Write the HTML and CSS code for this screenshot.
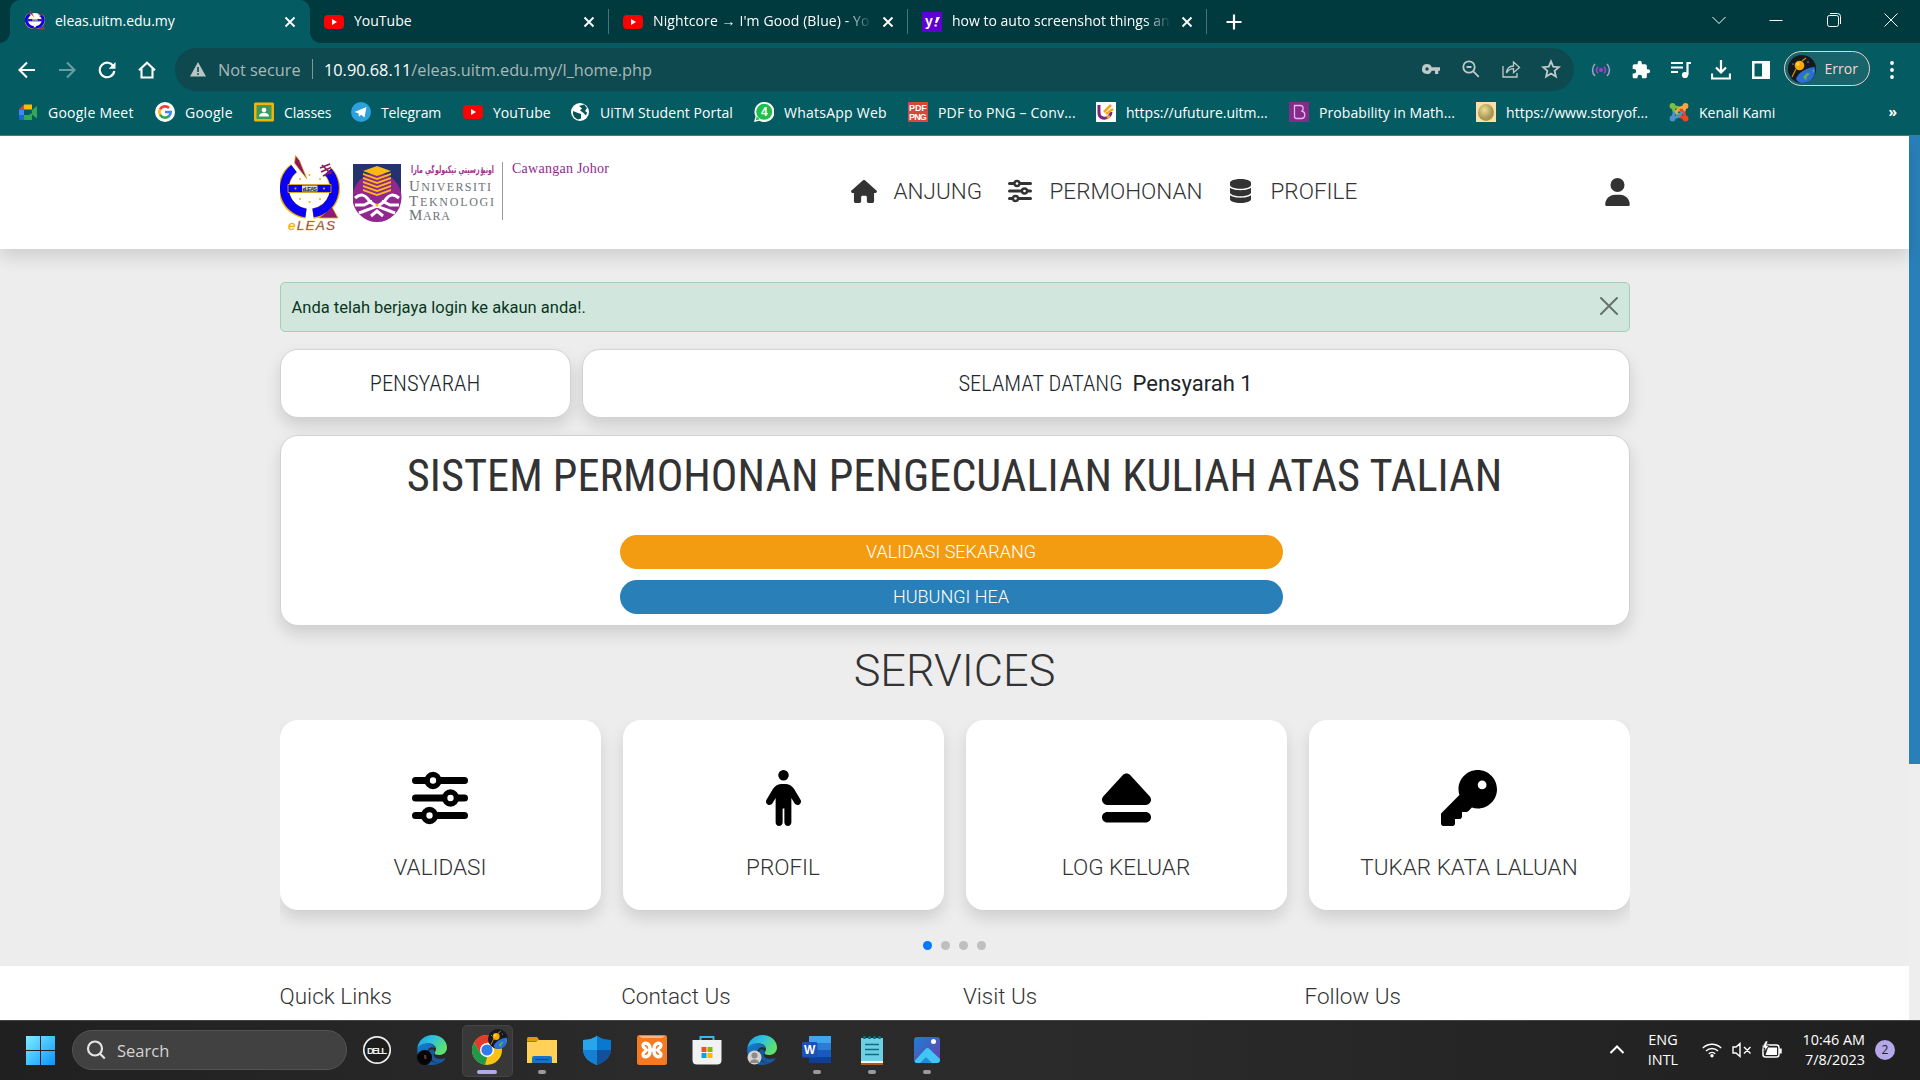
FILE: index.html
```html
<!DOCTYPE html>
<html lang="ms">
<head>
<meta charset="utf-8">
<title>eleas.uitm.edu.my</title>
<link rel="stylesheet" href="styles.css">
</head>
<body>
<svg class="defs" width="0" height="0" aria-hidden="true">
  <defs>
    <symbol id="sliders" viewBox="0 0 512 512">
      <path d="M32 96H480M32 256H480M32 416H480" stroke="currentColor" stroke-width="64" stroke-linecap="round"/>
      <g fill="#fff" stroke="currentColor" stroke-width="50"><circle cx="192" cy="96" r="54"/><circle cx="352" cy="256" r="54"/><circle cx="160" cy="416" r="54"/></g>
    </symbol>
    <symbol id="yt" viewBox="0 0 20 20"><rect y="3" width="20" height="14" rx="4" fill="#f00"/><path d="M8 7l5 3-5 3z" fill="#fff"/></symbol>
    <symbol id="x" viewBox="0 0 12 12"><path d="M1.5 1.5l9 9M10.500 1.500l-9 9" stroke="#fff" stroke-width="1.900"/></symbol>
    <linearGradient id="edgeA" x1="0" y1="0" x2="1" y2=".5"><stop offset="0" stop-color="#1b9de2"/><stop offset=".5" stop-color="#2fc2df"/><stop offset="1" stop-color="#62e06a"/></linearGradient>
    <linearGradient id="edgeB" x1="0" y1="0" x2="1" y2="1"><stop offset="0" stop-color="#1480cf"/><stop offset="1" stop-color="#0f4a96"/></linearGradient>
    <symbol id="edge" viewBox="0 0 30 30">
      <path d="M.3 14C1 5 8 0 15.500 0 24 0 30 6 30 12.500c0 5-4 7.500-8 7.500-3 0-4.500-1-4.500-2 0-1 1.500-1.500 1.500-4 0-3-3-5.500-7-5.500C6 8.500 1 11 .3 14z" fill="url(#edgeA)"/>
      <path d="M.3 14C1.500 10 6 8 11 8.500c4 .3 7 2.500 7 4.500-4-2-8 1-8 5.500 0 5 4 9 9.500 9 4 0 7-1.500 8.500-4C25.500 27.500 20.500 30 15 30 6.500 30-.5 23 .3 14z" fill="url(#edgeB)"/>
      <path d="M15 14c-3 1-4 4-3 7 1.500 5 7 7.500 12 6.500 2-.5 4-2.500 4.500-4.500-5 2-10 1-11.500-2-.8-1.600.5-3 .5-5z" fill="#17589f"/>
    </symbol>
    <symbol id="avatar" viewBox="0 0 28 28">
      <circle cx="14" cy="14" r="14" fill="#15191f"/>
      <path d="M8 24C10 18 17 13 26.500 12 29 20 23 28 14 28c-2 0-5-1.500-6-4z" fill="#2a6fd6"/>
      <path d="M15 22l4-4 3 .5-3 3-1 4zM24 15l2 0 0 3z" fill="#5fae4a"/>
      <circle cx="11.500" cy="10.500" r="4.800" fill="#f7a900"/><path d="M8 14l-4 8M14 6l4-3" stroke="#d98a10" stroke-width="1.200"/><circle cx="10" cy="9" r="1.800" fill="#ffd34d"/>
      <circle cx="20" cy="7" r=".6" fill="#fff"/><circle cx="5" cy="9" r=".6" fill="#fff"/>
    </symbol>
    <symbol id="eleas" viewBox="0 0 60 78" preserveAspectRatio="none">
      <circle cx="29.500" cy="34.500" r="24" fill="#fff"/>
      <path d="M14 14.500A25 25 0 0 0 26 59.500M33 59.500A25 25 0 0 0 48 17.500" fill="none" stroke="#f0b000" stroke-width="10.500"/>
      <path d="M52 53l6 11H39z" fill="#8b1a7a" stroke="#f0b000" stroke-width=".8"/>
      <path d="M14 14.500A25 25 0 0 0 26 59M33 59A25 25 0 0 0 48 17.500" fill="none" stroke="#0a00f5" stroke-width="8.800"/>
      <path d="M8 30.500h43v8H8z" fill="#0a00f5" stroke="#f0b000" stroke-width=".8"/>
      <circle cx="29.500" cy="21" r="1" fill="#f0b000"/><circle cx="20" cy="25" r="1" fill="#f0b000"/><circle cx="40" cy="25" r="1" fill="#f0b000"/><circle cx="29.500" cy="48" r="1" fill="#f0b000"/><circle cx="20" cy="45" r="1" fill="#f0b000"/><circle cx="40" cy="45" r="1" fill="#f0b000"/>
      <circle cx="15.500" cy="34.500" r="1" fill="#f0b000"/><circle cx="44" cy="34.500" r="1" fill="#f0b000"/>
      <rect x="22" y="31.500" width="15.500" height="6" fill="#d9d9e8"/><text x="22.500" y="36.600" font-family="Liberation Sans" font-size="5.500" font-weight="700" textLength="14.500" fill="#222">eLEAS</text>
      <path d="M15.500 1.500l4 5L27 25l-6.500-8L14.500 9z" fill="#8b1a5c" stroke="#f0b000" stroke-width=".6"/>
      <path d="M40 14l10-4M41 18l10-4.500M43 22l9-4.500M42 11l9 9" stroke="#8b1a5c" stroke-width="1.700" fill="none"/>
    </symbol>
  </defs>
</svg>

<div class="screen">
  <div class="tabs">
    <div class="tab active"><svg class="fav" width="20" height="23"><use href="#eleas"/></svg><span class="title">eleas.uitm.edu.my</span><svg class="close" width="12" height="12"><use href="#x"/></svg></div>
    <div class="tab t2"><svg class="fav" width="20" height="20"><use href="#yt"/></svg><span class="title">YouTube</span><svg class="close" width="12" height="12"><use href="#x"/></svg></div>
    <div class="tab t3"><svg class="fav" width="20" height="20"><use href="#yt"/></svg><span class="title fade">Nightcore → I'm Good (Blue) - Yo</span><svg class="close" width="12" height="12"><use href="#x"/></svg></div>
    <div class="tab t4"><svg class="fav" width="20" height="20" viewBox="0 0 20 20"><rect width="20" height="20" fill="#5f01d1"/><text x="3" y="14" font-family="Liberation Sans" font-weight="700" font-size="14" fill="#fff">y</text><path d="M13 11l1.500-6H18l-3 6zM12.500 12.500h2.200v2h-2.200z" fill="#fff"/></svg><span class="title fade">how to auto screenshot things an</span><svg class="close" width="12" height="12"><use href="#x"/></svg></div>
    <svg class="newtab" width="16" height="16" viewBox="0 0 16 16"><path d="M8 .5v15M.5 8h15" stroke="#fff" stroke-width="2.200"/></svg>
    <div class="winctl">
      <svg width="14" height="14" viewBox="0 0 14 14"><path d="M.5 4L7 10.500 13.500 4"/></svg>
      <svg width="14" height="14" viewBox="0 0 14 14"><path d="M.5 7.500h13"/></svg>
      <svg width="14" height="14" viewBox="0 0 14 14"><rect x=".5" y="2.500" width="11" height="11" rx="2"/><path d="M3 .5h7.500a3 3 0 0 1 3 3V11"/></svg>
      <svg width="14" height="14" viewBox="0 0 14 14"><path d="M.5.5l13 13M13.500.5l-13 13"/></svg>
    </div>
  </div>

  <div class="toolbar">
    <div class="navbtns">
      <svg width="18" height="18" viewBox="0 0 18 18"><path d="M17 9H2M9 1.500L1.500 9 9 16.500"/></svg>
      <svg class="dim" width="18" height="18" viewBox="0 0 18 18"><path d="M1 9h15M9 1.500L16.500 9 9 16.500"/></svg>
      <svg width="18" height="18" viewBox="0 0 18 18"><path d="M15.500 5.500A7.300 7.300 0 1 0 16.300 10"/><path d="M17.500 1v6.800h-6.800z" fill="#fff" stroke="none"/></svg>
      <svg width="18" height="18" viewBox="0 0 18 18"><path d="M3.500 7.500v9h11v-9M1 9.200L9 1.800l8 7.400"/></svg>
    </div>
    <div class="omnibox">
      <svg class="warn" width="16" height="15" viewBox="0 0 16 15"><path d="M8 0l8 14.500H0z" fill="#b9c4c6"/><path d="M8 5v5M8 11.200v1.800" stroke="#0e494f" stroke-width="1.600"/></svg>
      <span class="insecure">Not secure</span><i></i>
      <span class="url"><b>10.90.68.11</b>/eleas.uitm.edu.my/l_home.php</span>
      <div class="omniicons">
        <svg width="20" height="20" viewBox="0 0 20 20"><path d="M6 5a5 5 0 1 0 4.700 6.700H14V15h3.300v-3.300H19V8.300h-8.300A5 5 0 0 0 6 5zm0 3.300a1.700 1.700 0 1 1 0 3.400 1.700 1.700 0 0 1 0-3.400z" fill="#bfc9ca"/></svg>
        <svg class="ln" width="20" height="20" viewBox="0 0 20 20"><circle cx="8" cy="8" r="5.700"/><path d="M12.300 12.300l5.500 5.500M5.500 8h5"/></svg>
        <svg class="ln thin" width="20" height="20" viewBox="0 0 20 20"><path d="M2 7v11h14v-4M5.500 14c.5-4.500 3-7 7-7V3l6 5.500-6 5v-3.800c-3 0-5 1-7 4.300z"/></svg>
        <svg class="ln" width="20" height="20" viewBox="0 0 20 20"><path d="M10 2.300l2.200 5.300 5.700.5-4.300 3.800 1.300 5.600-4.900-3-4.900 3 1.300-5.600L2.100 8.100l5.700-.5z"/></svg>
      </div>
    </div>
    <div class="ext">
      <svg width="20" height="20" viewBox="0 0 20 20" fill="none" stroke="#b13bd0" stroke-width="1.500"><circle cx="10" cy="10" r="1.300" fill="#b51fd1"/><path d="M7 6.700a5 5 0 0 0 0 6.600M13 6.700a5 5 0 0 1 0 6.600"/><path stroke="#a9a0c8" d="M4 4a8.500 8.500 0 0 0 0 12M16 4a8.500 8.500 0 0 1 0 12"/></svg>
      <svg width="20" height="20" viewBox="0 0 24 24"><path fill="#fff" d="M20.500 11H19V7c0-1.100-.9-2-2-2h-4V3.500a2.500 2.500 0 0 0-5 0V5H4a2 2 0 0 0-2 2v3.800h1.500a2.700 2.700 0 0 1 0 5.400H2V20c0 1.100.9 2 2 2h3.800v-1.500a2.700 2.700 0 0 1 5.400 0V22H17a2 2 0 0 0 2-2v-4h1.500a2.500 2.500 0 0 0 0-5z"/></svg>
      <svg width="20" height="20" viewBox="0 0 20 20" fill="none" stroke="#fff" stroke-width="2.200"><path d="M0 3h12M0 7.500h12M0 12h7M16.500 15V3H20"/><circle cx="14" cy="15" r="2" fill="#fff"/></svg>
      <svg width="20" height="20" viewBox="0 0 20 20" fill="none" stroke="#fff" stroke-width="2.200"><path d="M10 0v12M5 7.500l5 5 5-5M1 13.500V18.500h18v-5"/></svg>
      <svg width="20" height="20" viewBox="0 0 20 20"><path fill="#fff" fill-rule="evenodd" d="M1 1h18v18H1zM3.500 3.500v13H11v-13z"/></svg>
    </div>
    <div class="chip"><svg width="28" height="28"><use href="#avatar"/></svg><span>Error</span></div>
    <svg class="kebab" width="4" height="18" viewBox="0 0 4 18" fill="#fff"><circle cx="2" cy="2" r="1.900"/><circle cx="2" cy="9" r="1.900"/><circle cx="2" cy="16" r="1.900"/></svg>
  </div>

  <div class="bookmarks">
    <div><svg width="20" height="20" viewBox="0 0 20 20"><path d="M6 2.500h8v5H6z" fill="#fbbc04"/><path d="M1 7.500l5-5v5z" fill="#ea4335"/><path d="M1 7.500h5v6H1z" fill="#4285f4"/><path d="M1 13.500h5V18H2.500C1.500 18 1 17.500 1 16.500z" fill="#1967d2"/><path d="M6 13h5l3-2v7H6zM14 8l5-4v12.500L14 12.500z" fill="#34a853"/></svg><span>Google Meet</span></div>
    <div><svg width="20" height="20" viewBox="0 0 20 20"><circle cx="10" cy="10" r="10" fill="#fff"/><g fill="none" stroke-width="2.600"><path d="M14 6A5.700 5.700 0 0 0 5 7.300" stroke="#ea4335"/><path d="M5 7.300a5.700 5.700 0 0 0 0 5.400" stroke="#fbbc04"/><path d="M5 12.700a5.700 5.700 0 0 0 8.800 1.500" stroke="#34a853"/><path d="M13.600 14.400A5.700 5.700 0 0 0 15.700 10H10" stroke="#4285f4"/></g></svg><span>Google</span></div>
    <div><svg width="20" height="20" viewBox="0 0 20 20"><rect width="20" height="19" y=".5" rx="1.500" fill="#f4b400"/><rect x="2.500" y="3" width="15" height="14" fill="#3c9b57"/><circle cx="10" cy="8" r="2.300" fill="#fff"/><path d="M5 14.500c0-5 10-5 10 0z" fill="#fff"/></svg><span>Classes</span></div>
    <div><svg width="20" height="20" viewBox="0 0 20 20"><circle cx="10" cy="10" r="10" fill="#2ba1dd"/><path d="M3.500 10L15.500 5l-2 10.500-3.500-2.700-2 2-.7-3.500z" fill="#fff"/></svg><span>Telegram</span></div>
    <div><svg width="20" height="20"><use href="#yt"/></svg><span>YouTube</span></div>
    <div><svg width="20" height="20" viewBox="0 0 20 20"><circle cx="10" cy="10" r="9" fill="#fff"/><path d="M3 9l5 2 3 1v4.500l-3 1C4 16 2.500 13 3 9zM9 4l5-1.500L17 6l-2 3 2 1.500-1 3-3-3-3-2 2-2z" fill="#07545a"/></svg><span>UiTM Student Portal</span></div>
    <div><svg width="20" height="20" viewBox="0 0 20 20"><path d="M0 20l1.500-5.500A10 10 0 1 1 5.500 18.700z" fill="#fff"/><circle cx="10.200" cy="9.800" r="8" fill="#1fbf4a"/><path d="M1.800 18.200l1-4 3 3z" fill="#1fbf4a"/><text x="7" y="14.200" font-family="Liberation Sans" font-size="12" font-weight="700" fill="#fff">4</text></svg><span>WhatsApp Web</span></div>
    <div><svg width="20" height="20" viewBox="0 0 20 20"><rect width="20" height="20" fill="#d6493a"/><g font-family="Liberation Sans" font-size="9" font-weight="700" fill="#fff"><text x="1" y="9" textLength="18">PDF</text><text x="1" y="18" textLength="18">PNG</text></g></svg><span>PDF to PNG – Conv...</span></div>
    <div><svg width="20" height="20" viewBox="0 0 20 20"><rect width="20" height="20" fill="#fff"/><path d="M3 3c0 8-1 12 4 13s8-3 8-6" fill="none" stroke="#7c2682" stroke-width="3"/><path d="M8 10l7-7M10 12l7-5M11 16l3-2" stroke="#f2a81d" stroke-width="2.600"/></svg><span>https://ufuture.uitm...</span></div>
    <div><svg width="20" height="20" viewBox="0 0 20 20"><rect width="20" height="20" fill="#862a8b"/><path d="M5.500 3.500h6c3 0 3.500 4 1.500 5.500 4 1 3.500 7.500-.5 7.500h-5c-1.500 0-2-1-2-2z" fill="none" stroke="#e3b8e6" stroke-width="1.300"/></svg><span>Probability in Math...</span></div>
    <div><svg width="20" height="20" viewBox="0 0 20 20"><defs><radialGradient id="egg" cx=".4" cy=".35"><stop offset="0" stop-color="#efe08e"/><stop offset="1" stop-color="#a8965a"/></radialGradient></defs><rect width="20" height="20" fill="#fbdfa4"/><ellipse cx="10" cy="10.500" rx="8" ry="8.500" fill="url(#egg)"/></svg><span>https://www.storyof...</span></div>
    <div><svg width="20" height="20" viewBox="0 0 20 20" fill="none" stroke-width="3" stroke-linecap="round"><path d="M4 15V11q0-2 2-4l3-3q2-1.500 4 0l2 2" stroke="#5091cd" transform="rotate(180 10 10)" stroke-opacity="0"/><path d="M4.500 13.500V8.500L9 4" stroke="#7ac143" stroke-opacity="0"/><path d="M4 4.500L5 9 11.500 14.500" stroke="#7ac143"/><path d="M4 4.500L9 5.500 12 9" stroke="#7ac143"/><path d="M16 4.500L11 6 7 10M16 4.500L15 9" stroke="#f9a541"/><path d="M16 16L15 11 12 8M16 16l-5-1.500" stroke="#f44321"/><path d="M4 16l5-1.500L12.500 11M4 16l1-5" stroke="#5091cd"/><g stroke="none"><circle cx="3.500" cy="4" r="2.900" fill="#7ac143"/><circle cx="16.500" cy="4" r="2.900" fill="#f9a541"/><circle cx="16.500" cy="16.500" r="2.900" fill="#f44321"/><circle cx="3.500" cy="16.500" r="2.900" fill="#5091cd"/></g></svg><span>Kenali Kami</span></div>
    <em>»</em>
  </div>

  <div class="page">
    <div class="view">
      <header>
        <div class="wrap headrow">
          <div class="logos">
            <svg width="60" height="78" viewBox="0 0 60 78"><use href="#eleas"/><text y="76.200" x="8" font-family="Liberation Sans" font-style="italic" font-size="13.500" textLength="47" fill="#3a1a9c" stroke="#f0b000" stroke-width=".4"><tspan fill="#f5b800">e</tspan>LEAS</text></svg>
            <svg width="260" height="62" viewBox="0 0 260 62">
              <path d="M0 2h48v33H0z" fill="#24326e"/><circle cx="24" cy="35.500" r="24.500" fill="#92278f"/>
              <g fill="#fdb913"><path d="M24 4l14 5-14 5-14-5z"/><path d="M10 11l14 5 14-5v2l-14 5-14-5zM10 15l14 5 14-5v2l-14 5-14-5zM10 19l14 5 14-5v2l-14 5-14-5zM10 23l14 5 14-5v2l-14 5-14-5zM10 27l14 5 14-5v2l-14 5-14-5z"/></g>
              <path d="M2 36c6-5 10-3 13 1 3 6 14 9 27 14M46 36c-6-5-10-3-13 1-3 6-14 9-27 14M2 43h9l8-4M46 43h-9l-8-4M18 54l6-5 6 5" fill="none" stroke="#fff" stroke-width="3"/>
              <circle cx="24" cy="43" r="1.600" fill="#fdb913"/>
              <text x="58" y="11" font-family="DejaVu Sans" font-size="10.500" font-weight="700" fill="#a0308f" textLength="83" lengthAdjust="spacingAndGlyphs">اونيۏرسيتي تيكنولوݢي مارا</text>
              <g font-family="Liberation Serif" fill="#6d7478"><text x="56" y="29" font-size="12" textLength="82"><tspan font-size="15">U</tspan>NIVERSITI</text><text x="56" y="43.500" font-size="12" textLength="85"><tspan font-size="15">T</tspan>EKNOLOGI</text><text x="56" y="57.500" font-size="12" textLength="41"><tspan font-size="15">M</tspan>ARA</text></g>
              <path d="M149.500 0v58" stroke="#9b9b9b"/>
              <text x="159" y="11" font-family="Liberation Serif" font-size="14" textLength="97" fill="#92278f">Cawangan Johor</text>
            </svg>
          </div>
          <nav>
            <a><svg width="26" height="23" viewBox="0 0 576 512"><path fill="currentColor" d="M575.800 255.500c0 18-15 32.100-32 32.100h-32l.7 160.200c0 2.700-.2 5.400-.5 8.100V472c0 22.100-17.900 40-40 40H392c-22.100 0-40-17.900-40-40V384c0-17.700-14.300-32-32-32H256c-17.700 0-32 14.300-32 32v88c0 22.100-17.900 40-40 40H104c-22.100 0-40-17.900-40-40V287.600H32c-18 0-32-14-32-32.100c0-9 3-17 10-24L266.400 8c7-7 15-8 22-8s15 2 21 7L564.800 231.500c8 7 12 15 11 24z"/></svg><span>ANJUNG</span></a>
            <a><svg width="24" height="24"><use href="#sliders"/></svg><span>PERMOHONAN</span></a>
            <a><svg width="21" height="24" viewBox="0 0 448 512"><path fill="currentColor" d="M448 80v48c0 44.200-100.300 80-224 80S0 172.200 0 128V80C0 35.800 100.300 0 224 0S448 35.800 448 80zM393.200 214.700c20.800-7.400 39.900-16.900 54.800-28.600V288c0 44.200-100.300 80-224 80S0 332.200 0 288V186.100c14.900 11.800 34 21.200 54.800 28.600C99.700 230.700 159.500 240 224 240s124.300-9.300 169.200-25.300zM0 346.100c14.900 11.800 34 21.200 54.800 28.600C99.700 390.700 159.500 400 224 400s124.300-9.300 169.200-25.300c20.800-7.400 39.900-16.900 54.800-28.600V432c0 44.200-100.300 80-224 80S0 476.200 0 432V346.100z"/></svg><span>PROFILE</span></a>
          </nav>
          <svg class="user" width="25" height="28" viewBox="0 0 448 512"><path fill="#333" d="M224 256A128 128 0 1 0 224 0a128 128 0 1 0 0 256zm-45.700 48C79.800 304 0 383.800 0 482.300C0 498.700 13.300 512 29.700 512H418.300c16.400 0 29.700-13.300 29.700-29.700C448 383.800 368.200 304 269.700 304H178.300z"/></svg>
        </div>
      </header>

      <main class="wrap">
        <div class="alert"><span>Anda telah berjaya login ke akaun anda!.</span><svg width="18" height="18" viewBox="0 0 18 18"><path d="M1 1l16 16M17 1L1 17" stroke="#66726c" stroke-width="2" stroke-linecap="round"/></svg></div>
        <div class="row">
          <div class="card role">PENSYARAH</div>
          <div class="card hello">SELAMAT DATANG<strong>Pensyarah 1</strong></div>
        </div>
        <section class="card hero">
          <h1>SISTEM PERMOHONAN PENGECUALIAN KULIAH ATAS TALIAN</h1>
          <a class="btn orange">VALIDASI SEKARANG</a>
          <a class="btn blue">HUBUNGI HEA</a>
        </section>
        <h2>SERVICES</h2>
        <div class="slider">
          <div class="svc"><svg width="56" height="56"><use href="#sliders"/></svg><span>VALIDASI</span></div>
          <div class="svc"><svg width="35" height="56" viewBox="0 0 320 512"><path d="M112 48a48 48 0 1 1 96 0 48 48 0 1 1 -96 0zm40 304V480c0 17.700-14.300 32-32 32s-32-14.300-32-32V256.900L59.400 304.500c-9.100 15.100-28.800 20-43.900 10.900s-20-28.800-10.900-43.900l58.300-97c17.400-28.900 48.600-46.600 82.300-46.600h29.700c33.700 0 64.900 17.700 82.300 46.600l58.300 97c9.100 15.100 4.200 34.800-10.900 43.900s-34.800 4.200-43.900-10.900L232 256.900V480c0 17.700-14.300 32-32 32s-32-14.300-32-32V352H152z"/></svg><span>PROFIL</span></div>
          <div class="svc"><svg width="49" height="56" viewBox="0 0 448 512"><path d="M224 32c13.500 0 26.300 5.600 35.400 15.600l176 192c12.900 14 16.200 34.300 8.600 51.800S419 320 400 320H48c-19 0-36.300-11.200-43.900-28.700s-4.300-37.700 8.600-51.800l176-192C197.700 37.600 210.500 32 224 32zM0 432c0-26.500 21.500-48 48-48H400c26.500 0 48 21.500 48 48s-21.500 48-48 48H48c-26.500 0-48-21.500-48-48z"/></svg><span>LOG KELUAR</span></div>
          <div class="svc"><svg width="56" height="56" viewBox="0 0 512 512"><path d="M336 352c97.200 0 176-78.800 176-176S433.200 0 336 0S160 78.800 160 176c0 18.700 2.900 36.800 8.300 53.700L7 391c-4.500 4.500-7 10.600-7 17v80c0 13.300 10.700 24 24 24h80c13.300 0 24-10.700 24-24V448h40c13.300 0 24-10.700 24-24V384h40c6.400 0 12.500-2.500 17-7l33.300-33.300c16.900 5.400 35 8.300 53.700 8.300zM376 96a40 40 0 1 1 0 80 40 40 0 1 1 0-80z"/></svg><span>TUKAR KATA LALUAN</span></div>
        </div>
        <div class="dots"><i class="on"></i><i></i><i></i><i></i></div>
      </main>

      <footer><div class="wrap foot"><span>Quick Links</span><span>Contact Us</span><span>Visit Us</span><span>Follow Us</span></div></footer>
    </div>
    <div class="scroll"><div class="thumb"></div></div>
  </div>

  <div class="taskbar">
    <svg class="win" width="29" height="29" viewBox="0 0 29 29"><defs><linearGradient id="w" x1="0" y1="0" x2="1" y2="1"><stop offset="0" stop-color="#7df0ff"/><stop offset="1" stop-color="#0a93ff"/></linearGradient></defs><path fill="url(#w)" d="M0 0h14v14H0zM15 0h14v14H15zM0 15h14v14H0zM15 15h14v14H15z"/></svg>
    <div class="search"><svg width="20" height="20" viewBox="0 0 20 20" fill="none" stroke="#e4e4e4" stroke-width="2.200"><circle cx="9" cy="8.500" r="7"/><path d="M13.800 13.500l5 5"/></svg><span>Search</span></div>
    <div class="apps">
      <div><svg width="30" height="30" viewBox="0 0 30 30"><circle cx="15" cy="15" r="13.200" fill="#1d1d1d" stroke="#eee" stroke-width="1.700"/><text x="5" y="18.500" font-family="Liberation Sans" font-weight="700" font-size="9.500" textLength="20" fill="#eee">DELL</text></svg></div>
      <div><svg width="30" height="30" viewBox="0 0 30 30"><use href="#edge"/><circle cx="7.500" cy="22.500" r="7.500" fill="#050505"/><path d="M7 20h2l.5 4H7.500z" fill="#6a3a30"/></svg></div>
      <div class="cur"><svg width="30" height="30" viewBox="0 0 30 30"><circle cx="15" cy="15" r="15" fill="#fbc116"/><path d="M2 7.500A15 15 0 0 1 28 7.500H15L8.500 18.500z" fill="#e33b2e"/><path d="M2 7.500L8.500 18.500 15 22.500 13 29.900A15 15 0 0 1 2 7.500z" fill="#1f9a48"/><circle cx="15" cy="15" r="7" fill="#fff"/><circle cx="15" cy="15" r="5.600" fill="#2f7bea"/></svg><svg class="mini" width="20" height="20"><use href="#avatar"/></svg><u class="on"></u></div>
      <div><svg width="30" height="30" viewBox="0 0 30 30"><path d="M0 3.500Q0 2 1.500 2H10l3 4H0z" fill="#dc9a06"/><path d="M0 6.500h9L12 5h18v23H0z" fill="#ffd257"/><path d="M5 28v-5q0-2 2-2h16q2 0 2 2v5z" fill="#1275c9"/><path d="M8.500 24.500h13" stroke="#0b4c8f" stroke-width="1.200"/></svg><u></u></div>
      <div><svg width="30" height="30" viewBox="0 0 30 30"><path d="M15 .5C11 4 6 4.500 1 5v9c0 8 6 13 14 16z" fill="#2aa4ea"/><path d="M15 .5c4 3.500 9 4 14 4.500v9c0 8-6 13-14 16z" fill="#0b78d0"/><path d="M1 15h14v15C7 27 1.500 22 1 15z" fill="#1380d6"/><path d="M15 15h14c-.5 7-6 12-14 15z" fill="#11509a"/></svg></div>
      <div><svg width="30" height="30" viewBox="0 0 30 30"><rect width="30" height="30" rx="2.500" fill="#f37a22"/><path d="M2 1h26l-3 2H5z" fill="#f9b48a"/><path d="M12 15h6M13 13.500c0-5.500-7-7-7-3C6 13 9 13 9 15S6 17 6 19.500c0 4 7 2.500 7-3M17 13.500c0-5.500 7-7 7-3 0 2.500-3 2.500-3 4.500s3 2 3 4.500c0 4-7 2.500-7-3" fill="none" stroke="#fff" stroke-width="3.300" stroke-linejoin="round" stroke-linecap="round"/></svg></div>
      <div><svg width="30" height="30" viewBox="0 0 30 30"><path d="M8.500 6V2h13v4" fill="none" stroke="#2dbdf0" stroke-width="2"/><path d="M.5 5h29v20q0 4.500-4.500 4.500H5Q.5 29.500.5 25z" fill="#f2f2f2"/><path fill="#f25022" d="M9.500 12h5v5h-5z"/><path fill="#7fba00" d="M15.500 12h5v5h-5z"/><path fill="#00a4ef" d="M9.500 18h5v5h-5z"/><path fill="#ffb900" d="M15.500 18h5v5h-5z"/></svg></div>
      <div><svg width="30" height="30" viewBox="0 0 30 30"><use href="#edge"/><circle cx="7.500" cy="22.500" r="7" fill="#d5d2cf"/><circle cx="7.500" cy="20.500" r="3" fill="#8d8a87"/><path d="M3 28c0-5 9-5 9 0z" fill="#8d8a87"/></svg></div>
      <div><svg width="30" height="30" viewBox="0 0 30 30"><path fill="#41a5ee" d="M7 1h22v7H7z"/><path fill="#2b7cd3" d="M7 8h22v7H7z"/><path fill="#185abd" d="M7 15h22v7H7z"/><path fill="#103f91" d="M7 22h22v6H7z"/><rect y="7" width="15.500" height="15.500" rx="1.500" fill="#1a52b5"/><text x="2" y="19" font-family="Liberation Sans" font-weight="700" font-size="12" fill="#fff">W</text></svg><u></u></div>
      <div><svg width="30" height="30" viewBox="0 0 30 30"><path d="M4 24h22v6H4z" fill="#b4551c"/><path d="M4 3h22v24H4z" fill="#6fcfe2"/><path d="M4 26h22v2H4z" fill="#f3f3f3"/><path d="M8 9.500h14M8 14.500h14M8 19.500h14" stroke="#0d6c86" stroke-width="1.700"/><path d="M7.500 1v3M12.500 1v3M17.500 1v3M22.500 1v3" stroke="#0d6c86" stroke-width="2.400"/></svg><u></u></div>
      <div><svg width="30" height="30" viewBox="0 0 30 30"><defs><linearGradient id="ph" x1="0" y1="0" x2="1" y2="1"><stop offset="0" stop-color="#1c7fd8"/><stop offset="1" stop-color="#6b3fa8"/></linearGradient></defs><rect x="2" y="2" width="26" height="26" rx="3" fill="url(#ph)"/><path d="M2.500 26l11-12q2-2 4 0L28 24v1q0 3-3 3H5q-2 0-2.500-2z" fill="#3fc6f5"/><path d="M8 28l6-6 6 6z" fill="#1d8ddb"/><circle cx="21.500" cy="6.500" r="2.500" fill="#fff"/></svg><u></u></div>
    </div>
    <div class="tray">
      <svg width="16" height="16" viewBox="0 0 16 16" class="tl"><path d="M1.500 11L8 4.500 14.500 11" stroke-width="2"/></svg>
      <div class="lang">ENG<br>INTL</div>
      <svg width="20" height="16" viewBox="0 0 20 16" class="tl"><path d="M.8 6a13 13 0 0 1 18.400 0M4 9a8.500 8.500 0 0 1 12 0M6.800 11.800a4.600 4.600 0 0 1 6.400 0" stroke-width="1.500"/><circle cx="10" cy="13.800" r="1.700" fill="#fff" stroke="none"/></svg>
      <svg width="20" height="16" viewBox="0 0 20 16" class="tl"><path d="M1 5v6h3l4 3.500v-13L4 5zM12 5l6.500 6.500M18.500 5L12 11.500" stroke-width="1.400"/></svg>
      <svg width="21" height="18" viewBox="0 0 21 18" class="tl"><rect x="1" y="4" width="16" height="12" rx="2.500" stroke-width="1.500"/><path d="M6 6.500h9V14H3.500z" fill="#fff" stroke="none"/><path d="M18.500 7.500v5" stroke-width="2.400"/><path d="M3.500 0L0 7h3l-1 4 5-6.500H4.500L6 0z" fill="#fff" stroke="#242424" stroke-width=".6"/></svg>
      <div class="clock">10:46 AM<br>7/8/2023</div>
      <div class="badge">2</div>
    </div>
  </div>
</div>
</body>
</html>
```
FILE: styles.css
```css
* { box-sizing: border-box; }
body { margin: 0; width: 1920px; height: 1080px; overflow: hidden; font-family: Roboto, sans-serif; color: #333; }
svg { display: block; flex: none; }
.defs { position: absolute; }
.screen { display: flex; flex-direction: column; width: 1920px; height: 1080px; }

/* browser chrome */
.tabs, .toolbar, .bookmarks, .taskbar { font-family: "Open Sans", sans-serif; color: #fff; white-space: nowrap; }
.tabs { height: 43px; background: #00393e; display: flex; align-items: center; padding-left: 10px; }
.tab { height: 43px; display: flex; align-items: center; font-size: 14px; padding-right: 13px; position: relative; }
.tab .fav { margin-right: 10px; }
.tab .title { flex: 1; overflow: hidden; padding-bottom: 2px; }
.fade { -webkit-mask-image: linear-gradient(90deg, #000 88%, transparent); mask-image: linear-gradient(90deg, #000 88%, transparent); margin-right: 10px; }
.active { width: 300px; padding-left: 15px; padding-right: 14px; background: #045c62; border-radius: 10px 10px 0 0; }
.active::before, .active::after { content: ""; position: absolute; bottom: 0; width: 10px; height: 10px; }
.active::before { left: -10px; background: radial-gradient(circle at 0 0, transparent 9.5px, #045c62 10px); }
.active::after { right: -10px; background: radial-gradient(circle at 100% 0, transparent 9.5px, #045c62 10px); }
.t2 { width: 299px; padding-left: 14px; padding-right: 14px; }
.t3, .t4 { width: 299px; padding-left: 14px; padding-right: 14px; }
.t2::after, .t3::after, .t4::after { content: ""; position: absolute; right: 0; top: 9px; width: 1px; height: 25px; background: #4b7478; }
.t4 .title, .t3 .title { margin-right: 10px; }
.t3 .title { letter-spacing: .1px; }
.newtab { margin-left: 19px; }
.winctl { margin-left: auto; display: flex; gap: 43.500px; padding: 0 22px 4px 0; }
.winctl svg { fill: none; stroke: #fff; stroke-width: 1; }

.toolbar { height: 53px; background: #045c62; display: flex; align-items: center; padding-left: 18px; }
.navbtns { display: flex; gap: 22px; width: 157px; }
.navbtns svg { fill: none; stroke: #fff; stroke-width: 2.100; }
.navbtns .dim { opacity: .4; }
.omnibox { width: 1399px; height: 43px; margin-top: -1px; border-radius: 22px; background: #0e494f; display: flex; align-items: center; padding-left: 15px; font-size: 16.300px; color: #a9b8ba; }
.insecure { margin-left: 12px; width: 94px; padding-top: 1px; }
.omnibox i { width: 1px; height: 20px; background: #7c989b; margin-right: 11px; }
.url { padding-top: 1px; }
.url b { font-weight: 400; color: #fff; }
.omniicons { margin-left: auto; display: flex; gap: 20px; padding-right: 13px; }
.ln { fill: none; stroke: #bfc9ca; stroke-width: 1.800; }
.thin { stroke-width: 1.300; }
.ext { display: flex; gap: 20px; margin-left: 17px; }
.chip { margin-left: 13px; width: 86px; height: 35px; margin-top: -2px; border: 1.500px solid #f0cfc9; border-radius: 18px; background: #17646a; display: flex; align-items: center; padding-left: 2.500px; gap: 9px; font-size: 14px; color: #f9d6cf; }
.kebab { margin-left: 20px; }

.bookmarks { height: 40px; background: #045c62; border-bottom: 1px solid #3b8086; display: flex; padding: 0 0 7px 18px; align-items: center; font-size: 14px; }
.bookmarks div { display: flex; align-items: center; gap: 10px; width: 107px; }
.bookmarks div:nth-child(1) { width: 137px; letter-spacing: .25px; }
.bookmarks div:nth-child(2) { width: 99px; letter-spacing: .3px; }
.bookmarks div:nth-child(3) { width: 97px; letter-spacing: -.1px; }
.bookmarks div:nth-child(4) { width: 112px; letter-spacing: -.1px; }
.bookmarks div:nth-child(6) { width: 184px; letter-spacing: .08px; }
.bookmarks div:nth-child(7) { width: 154px; letter-spacing: .25px; }
.bookmarks div:nth-child(8) { width: 188px; letter-spacing: .2px; }
.bookmarks div:nth-child(9) { width: 193px; }
.bookmarks div:nth-child(10) { width: 187px; letter-spacing: .07px; }
.bookmarks div:nth-child(11) { width: 193px; letter-spacing: .05px; }
.bookmarks em { margin-left: auto; margin-right: 23px; font-style: normal; font-weight: 700; padding-bottom: 2px; }

/* web page */
.page { height: 884px; display: flex; background: #ededed; overflow: hidden; }
.view { width: 1909px; display: flex; flex-direction: column; }
.scroll { width: 11px; background: #eee; }
.thumb { height: 628px; background: #2980b9; }
.wrap { width: 1350px; margin: 0 auto; }
header { height: 113px; background: #fff; box-shadow: 0 8px 16px rgba(0,0,0,.13); flex: none; position: relative; }
.headrow { display: grid; grid-template-columns: 571px 1fr auto; align-items: center; height: 113px; }
.logos { display: flex; gap: 13px; align-items: flex-start; height: 77px; }
.logos svg + svg { margin-top: 8px; }
nav { display: flex; font-size: 22.500px; font-weight: 300; padding-bottom: 1px; margin-top: -2px; }
nav a { display: flex; align-items: center; }
nav a span { line-height: 26px; padding-bottom: 1px; }
nav a svg { margin-right: 17px; }
nav a:nth-child(1) { width: 157px; }
nav a:nth-child(2) { width: 222px; }
nav a:nth-child(2) svg { margin-right: 18px; }
nav a:nth-child(3) svg { margin-right: 20px; }
.user { margin-top: -2px; }

main { padding-top: 33px; display: flex; flex-direction: column; }
.alert { height: 50px; border: 1px solid #a3cfbb; border-radius: 5px; background: #d1e7dd; display: flex; justify-content: space-between; align-items: center; padding: 0 11px; font-size: 16.500px; color: #0a3622; }
.alert svg { margin-top: -3px; }
.card { background: #fff; border: 1px solid #d2d2d2; border-radius: 18px; box-shadow: 0 8px 16px rgba(0,0,0,.13); }
.row { display: flex; gap: 11px; margin-top: 17px; }
.row .card { height: 69px; display: flex; align-items: center; justify-content: center; font-size: 22.500px; font-weight: 300; font-stretch: 75%; color: #212529; padding-bottom: 1px; }
.role { width: 291px; }
.hello { flex: 1; }
.hello strong { font-weight: 400; font-stretch: 100%; margin-left: 10px; font-size: 22px; }
.hero { height: 191px; margin-top: 17px; display: flex; flex-direction: column; align-items: center; }
.hero h1 { margin: 12px 0 31px; font-weight: 400; font-stretch: 75%; font-size: 44.400px; line-height: 56px; white-space: nowrap; }
.btn { width: 663px; height: 34px; border-radius: 18px; color: #fff; font-size: 18px; font-weight: 300; line-height: 34px; text-align: center; margin-bottom: 11px; margin-right: 7px; }
.orange { background: #f39c12; }
.blue { background: #2980b9; }
h2 { margin: 18px 0 23px; font-size: 45px; font-weight: 300; text-align: center; line-height: 53px; }
.slider { display: flex; justify-content: space-between; overflow: hidden; height: 214px; margin-bottom: 7px; }
.svc { width: 321px; height: 190px; border-radius: 18px; background: #fff; box-shadow: 0 8px 16px rgba(0,0,0,.13); display: flex; flex-direction: column; align-items: center; padding-top: 50px; color: #000; }
.svc span { color: #333; font-weight: 300; font-size: 22.500px; line-height: 28px; margin-top: 27px; }
.dots { display: flex; justify-content: center; gap: 9px; height: 25px; }
.dots i { width: 9px; height: 9px; border-radius: 50%; background: #bfbfbf; }
.dots .on { background: #007aff; }
footer { flex: 1; background: #fff; }
.foot { display: grid; grid-template-columns: repeat(4, 341.700px); font-size: 22.500px; font-weight: 300; padding-top: 16px; line-height: 28px; }

/* taskbar */
.taskbar { height: 60px; background: linear-gradient(90deg, #202020, #2b2b2b 35%, #2a2a2a 60%, #1f1f1f); border-top: 1px solid #454545; display: flex; align-items: center; padding: 0 0 1px 26px; }
.search { width: 275px; height: 40px; margin: 0 0 0 17px; border-radius: 20px; background: #414141; border: 1px solid #535353; display: flex; align-items: center; gap: 11px; padding-left: 13px; font-size: 16.500px; color: #d4d4d4; }
.apps { display: flex; margin-left: 2px; }
.apps div { width: 55px; height: 50px; display: flex; align-items: center; justify-content: center; position: relative; }
.apps u { position: absolute; bottom: 1px; left: 23.500px; width: 8px; height: 4px; border-radius: 2px; background: #9b9b9b; }
.apps u.on { left: 17.500px; width: 20px; background: #b4a7ea; }
.cur::before { content: ""; position: absolute; z-index: 0; left: 3px; top: 0; width: 49px; height: 50px; border-radius: 5px; background: #383838; border: 1px solid #454545; }
.cur svg { position: relative; }
.cur .mini { position: absolute; left: 29px; top: 4px; }
.tray { margin-left: auto; display: flex; align-items: center; font-size: 14.400px; line-height: 20px; padding-right: 25px; }
.tl { fill: none; stroke: #fff; }
.lang { margin: 0 23px 0 22px; text-align: center; width: 32px; }
.tray svg { margin-right: 10px; }
.tray svg:first-child { margin-right: 0; }
.clock { width: 72px; text-align: right; margin-right: 10px; }
.badge { width: 20px; height: 20px; border-radius: 50%; background: #b4a7ea; color: #222; font-size: 12px; text-align: center; line-height: 20px; }
```
